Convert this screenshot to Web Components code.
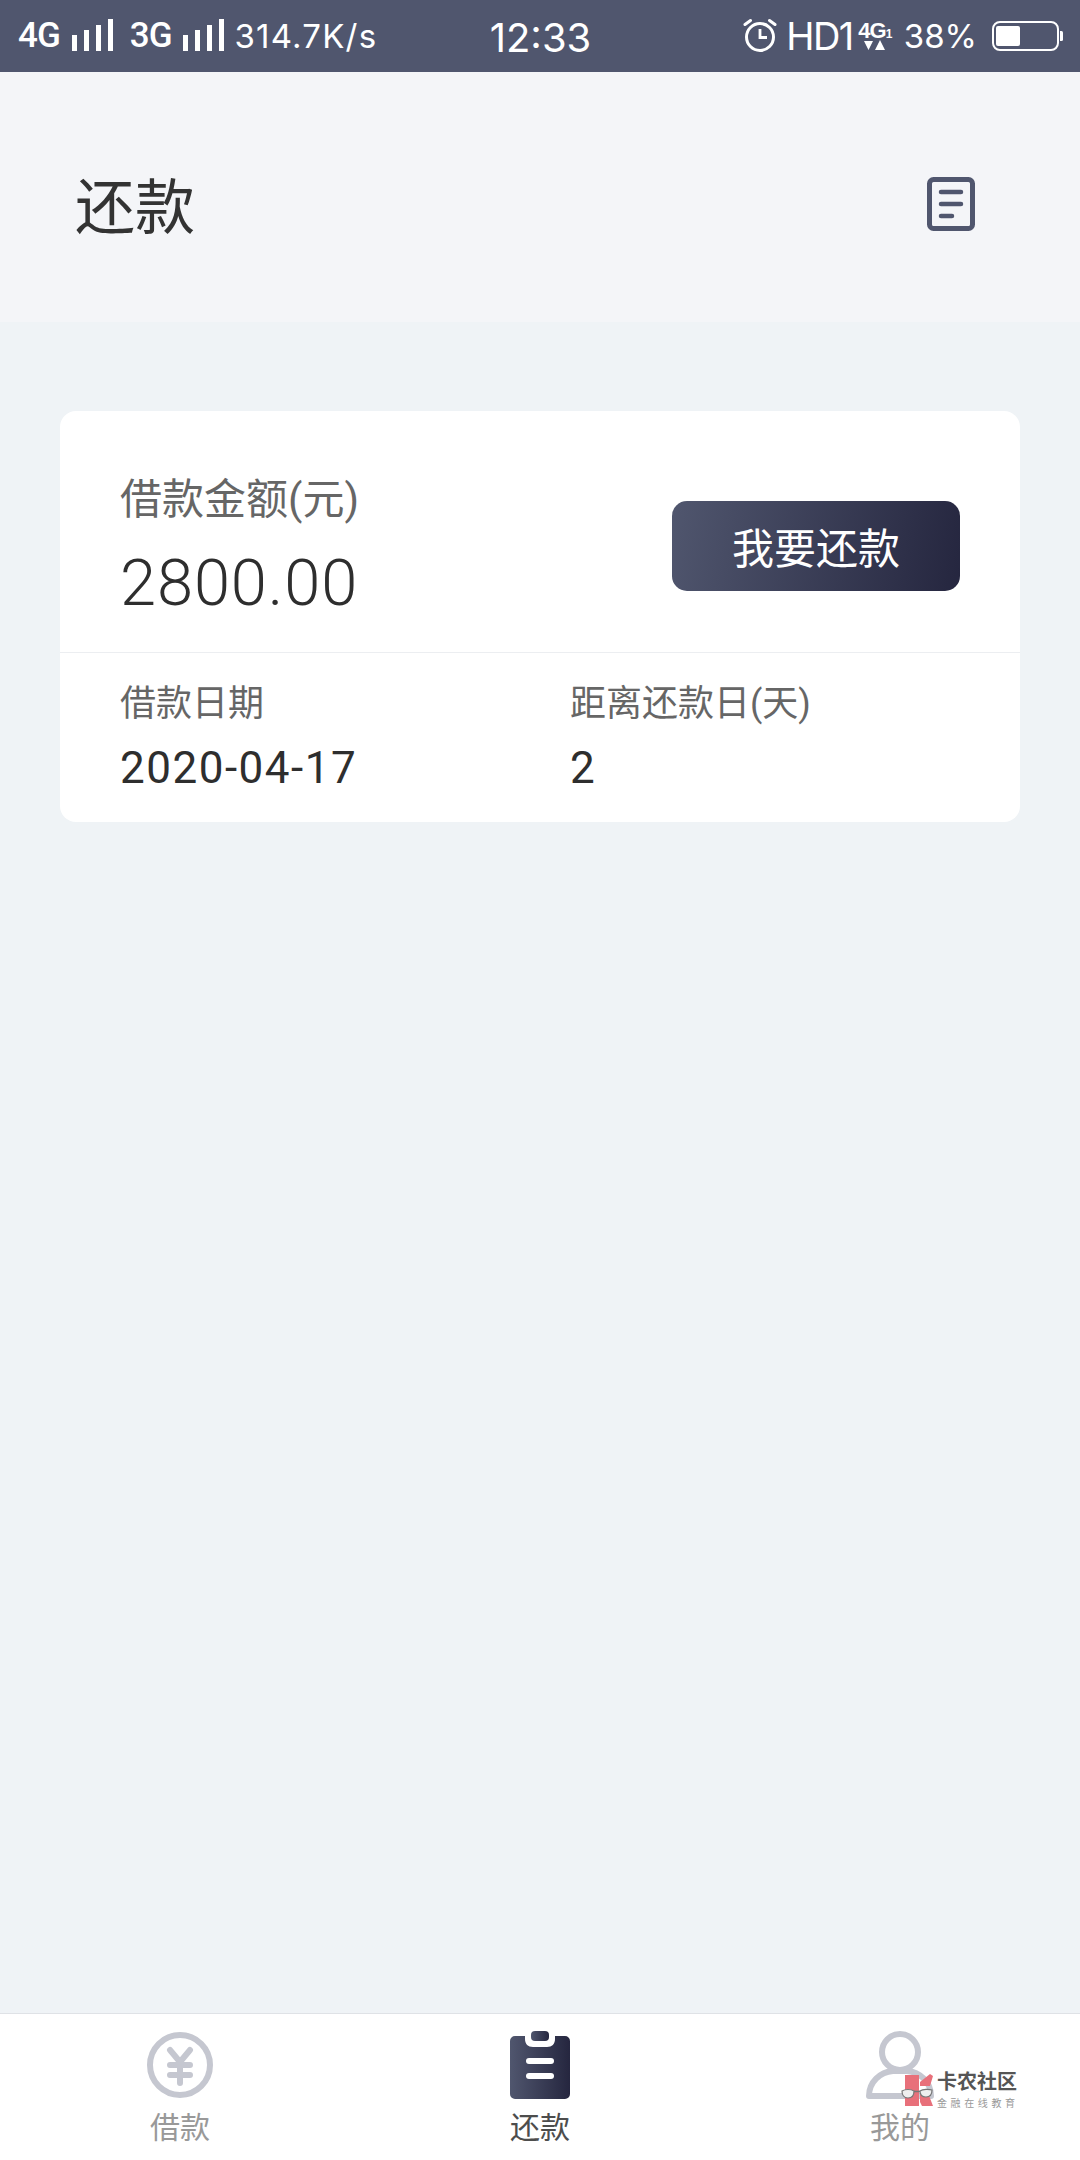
<!DOCTYPE html>
<html lang="zh">
<head>
<meta charset="utf-8">
<title>还款</title>
<style>
  html, body { margin: 0; padding: 0; height: 100%; }
  body { background: #eff3f6; font-family: Roboto, "Noto Sans CJK SC", sans-serif; }
  repay-page { height: 2160px; }
</style>
</head>
<body>
<repay-page>
  <status-bar slot="status"></status-bar>
  <page-header slot="header" title="还款"></page-header>
  <loan-card>
    <info-block slot="amount" label="借款金额(元)" value="2800.00" size="large"></info-block>
    <repay-button slot="action">我要还款</repay-button>
    <info-block slot="date" label="借款日期" value="2020-04-17"></info-block>
    <info-block slot="days" label="距离还款日(天)" value="2"></info-block>
  </loan-card>
  <tab-bar slot="tabs">
    <tab-item label="借款" icon="loan"></tab-item>
    <tab-item label="还款" icon="repay" active></tab-item>
    <tab-item label="我的" icon="me"></tab-item>
    <site-mark></site-mark>
  </tab-bar>
</repay-page>

<script>
class RepayPage extends HTMLElement {
  constructor() {
    super();
    this.attachShadow({ mode: 'open' });
    this.shadowRoot.innerHTML = `
      <style>
        :host { display: flex; flex-direction: column; background: #eff3f6; }
        main { flex: 1; padding: 89px 60px 0; }
      </style>
      <slot name="status"></slot>
      <slot name="header"></slot>
      <main><slot></slot></main>
      <slot name="tabs"></slot>
    `;
  }
}

class StatusBar extends HTMLElement {
  constructor() {
    super();
    this.attachShadow({ mode: 'open' });
    const bars = `<svg class="bars" width="42" height="32" viewBox="0 0 42 32" fill="#fff">
        <rect x="0" y="16" width="5" height="16"/><rect x="12" y="11" width="5" height="21"/>
        <rect x="24" y="6" width="5" height="26"/><rect x="36" y="0" width="5" height="32"/></svg>`;
    this.shadowRoot.innerHTML = `
      <style>
        :host {
          display: grid; grid-template-columns: 1fr auto 1fr; align-items: center;
          height: 72px; padding: 0 17px 0 18px; box-sizing: border-box;
          background: #50566e; color: #fff; font-family: Inter, Roboto, sans-serif;
        }
        .side { display: flex; align-items: center; height: 72px; }
        .right { justify-content: flex-end; }
        .net { font: 500 35px/72px Roboto, sans-serif; letter-spacing: -1px; }
        .bars { margin: -3px 0 0 12px; }
        .speed { font-size: 33px; margin-left: 9px; font-weight: 400; letter-spacing: 1.2px; }
        .clock { font-size: 40px; font-weight: 400; padding: 2px 0 0 0; }
        .hd { font-size: 38px; font-weight: 400; margin-left: 9px; letter-spacing: -1.5px; }
        .lte { margin-left: 6px; margin-right: 13px; display: flex; flex-direction: column; align-items: center; width: 32px; }
        .lte b { font: 700 22px/18px "Liberation Sans", sans-serif; letter-spacing: -1px; white-space: nowrap; }
        .lte b i { font: 700 12px/11px "Liberation Sans", sans-serif; }
        .pct { font-size: 33px; margin-right: 15px; }
        .alarm { margin-top: -2px; }
      </style>
      <div class="side">
        <span class="net">4G</span>${bars}
        <span class="net" style="margin-left:16px">3G</span>${bars}
        <span class="speed">314.7K/s</span>
      </div>
      <div class="clock">12:33</div>
      <div class="side right">
        <svg class="alarm" width="34" height="34" viewBox="0 0 34 34" fill="none" stroke="#fff" stroke-width="3">
          <circle cx="17" cy="19" r="13.5"/>
          <path d="M17 11v8.500h7" stroke-width="2.800"/>
          <path d="M2 6.500 7.500 2.500M32 6.500 26.500 2.500" stroke-linecap="round"/>
        </svg>
        <span class="hd">HD1</span>
        <span class="lte">
          <b>4G<i>1</i></b>
          <svg width="22" height="11" viewBox="0 0 22 11" fill="#fff"><path d="M0 1h9L4.500 10zM11 10h10L16 0z"/></svg>
        </span>
        <span class="pct">38%</span>
        <svg width="71" height="30" viewBox="0 0 71 30" fill="none">
          <rect x="1" y="1" width="65" height="28" rx="7" stroke="#fff" stroke-width="2"/>
          <rect x="4" y="5" width="24" height="20" rx="2" fill="#fff"/>
          <path d="M68 10h1.500a1.500 1.500 0 0 1 1.500 1.500v7a1.500 1.500 0 0 1-1.500 1.500H68z" fill="#fff"/>
        </svg>
      </div>
    `;
  }
}

class PageHeader extends HTMLElement {
  constructor() {
    super();
    this.attachShadow({ mode: 'open' });
    this.shadowRoot.innerHTML = `
      <style>
        :host {
          display: flex; align-items: center; justify-content: space-between;
          height: 250px; padding: 12px 105px 0 75px; box-sizing: border-box;
          background: #f4f5f8;
        }
        h1 { margin: 0; font: 400 60px/70px "Noto Sans CJK SC", sans-serif; color: #333; }
      </style>
      <h1>${this.getAttribute('title')}</h1>
      <svg width="48" height="54" viewBox="0 0 48 54" fill="none" stroke="#50566e" style="margin-top:2px">
        <rect x="2.500" y="2.500" width="43" height="49" rx="4" stroke-width="5"/>
        <path d="M14 15h20M14 27h20M14 39h11" stroke-width="4.500" stroke-linecap="round"/>
      </svg>
    `;
  }
}

class LoanCard extends HTMLElement {
  constructor() {
    super();
    this.attachShadow({ mode: 'open' });
    this.shadowRoot.innerHTML = `
      <style>
        :host { display: block; background: #fff; border-radius: 16px; }
        .top {
          display: flex; align-items: center; justify-content: space-between;
          height: 242px; padding: 29px 60px 0; box-sizing: border-box;
          border-bottom: 1px solid #eceef1;
        }
        .bottom {
          display: grid; grid-template-columns: 450px 1fr;
          height: 169px; padding: 28px 60px 0; box-sizing: border-box;
        }
      </style>
      <div class="top"><slot name="amount"></slot><slot name="action"></slot></div>
      <div class="bottom"><slot name="date"></slot><slot name="days"></slot></div>
    `;
  }
}

class InfoBlock extends HTMLElement {
  constructor() {
    super();
    this.attachShadow({ mode: 'open' });
    const large = this.getAttribute('size') === 'large';
    this.shadowRoot.innerHTML = `
      <style>
        :host { display: block; }
        .label {
          color: #666; font-family: Roboto, "Noto Sans CJK SC", sans-serif;
          font-size: ${large ? 42 : 36}px; line-height: ${large ? 56 : 46}px;
        }
        .value {
          color: #2e2e2e; font-family: Roboto, sans-serif; font-weight: ${large ? 300 : 400};
          font-size: ${large ? 65 : 44}px; line-height: ${large ? 76 : 52}px;
          letter-spacing: ${large ? 0.9 : 1.5}px;
          margin-top: ${large ? 17 : 15}px;
        }
      </style>
      <div class="label">${this.getAttribute('label')}</div>
      <div class="value">${this.getAttribute('value')}</div>
    `;
  }
}

class RepayButton extends HTMLElement {
  constructor() {
    super();
    this.attachShadow({ mode: 'open' });
    this.shadowRoot.innerHTML = `
      <style>
        :host {
          display: flex; align-items: center; justify-content: center;
          width: 288px; height: 90px; border-radius: 15px;
          background: linear-gradient(100deg, #50566e 0%, #25263f 100%);
          color: #fff; font: 400 42px/1 "Noto Sans CJK SC", sans-serif;
        }
      </style>
      <slot></slot>
    `;
  }
}

const TAB_ICONS = {
  loan: `<svg width="66" height="66" viewBox="0 0 66 66" fill="none" stroke="#c5c7d0">
      <circle cx="33" cy="33" r="30" stroke-width="6"/>
      <path d="M23 18 33 30 43 18M23 33h20M23 43h20M33 30v21" stroke-width="6" stroke-linecap="round" stroke-linejoin="round"/>
    </svg>`,
  repay: `<svg width="60" height="68" viewBox="0 0 60 68">
      <defs><linearGradient id="g" x1="0" x2="1" y1="0" y2="0"><stop offset="0" stop-color="#50566e"/><stop offset="1" stop-color="#25263f"/></linearGradient></defs>
      <rect x="21" y="0" width="18" height="10" rx="4" fill="url(#g)"/>
      <path d="M5 5h10v3c0 5 3 8 8 8h14c5 0 8-3 8-8V5h10a5 5 0 0 1 5 5v53a5 5 0 0 1-5 5H5a5 5 0 0 1-5-5V10a5 5 0 0 1 5-5z" fill="url(#g)"/>
      <rect x="16" y="27" width="28" height="6" rx="3" fill="#fff"/>
      <rect x="16" y="42" width="28" height="6" rx="3" fill="#fff"/>
    </svg>`,
  me: `<svg width="68" height="68" viewBox="0 0 68 68" fill="none" stroke="#c5c7d0" stroke-width="6">
      <circle cx="34" cy="21" r="18"/>
      <path d="M3 65c0-14 11-24 24-25h14c13 1 24 11 24 25z" stroke-linejoin="round"/>
    </svg>`
};

class TabItem extends HTMLElement {
  constructor() {
    super();
    this.attachShadow({ mode: 'open' });
    const active = this.hasAttribute('active');
    this.shadowRoot.innerHTML = `
      <style>
        :host { display: flex; flex-direction: column; align-items: center; flex: 1; }
        .icon { height: 68px; display: flex; align-items: center; }
        .label {
          margin-top: 6px; font: 400 30px/40px "Noto Sans CJK SC", sans-serif;
          color: ${active ? '#4d4d4d' : '#999'};
        }
      </style>
      <div class="icon">${TAB_ICONS[this.getAttribute('icon')]}</div>
      <div class="label">${this.getAttribute('label')}</div>
    `;
  }
}

class TabBar extends HTMLElement {
  constructor() {
    super();
    this.attachShadow({ mode: 'open' });
    this.shadowRoot.innerHTML = `
      <style>
        :host {
          display: flex; position: relative; height: 147px; padding-top: 17px; box-sizing: border-box;
          background: #fff; border-top: 1px solid #dfe2e6;
        }
      </style>
      <slot></slot>
    `;
  }
}

// forum watermark, sits over the third tab
class SiteMark extends HTMLElement {
  constructor() {
    super();
    this.attachShadow({ mode: 'open' });
    this.shadowRoot.innerHTML = `
      <style>
        :host {
          position: absolute; left: 900px; top: 59px; width: 120px; height: 36px;
          display: flex; gap: 3px; font-family: "Noto Sans CJK SC", sans-serif;
        }
        .name { font-size: 20px; line-height: 20px; font-weight: 700; color: #555; white-space: nowrap; margin-top: -2px; }
        .sub { font-size: 10px; line-height: 12px; color: #999; letter-spacing: 3.6px; white-space: nowrap; margin-top: 6px; }
      </style>
      <svg width="34" height="36" viewBox="0 0 34 36">
        <path d="M5 2h14v31H5zM20 9 30 1l3 2-3 10H20zM20 20h8l5 13H22l-2-4z" fill="#e8707a"/>
        <path d="M2 18c3-2 9-2 12 0 0 4-2 7-6 7s-6-3-6-7zM20 18c3-2 9-2 12-1 0 4-2 7-6 7s-6-2-6-6z" fill="#eee" stroke="#777" stroke-width="1.200"/>
        <path d="M14 18.500h6" stroke="#777" stroke-width="1.500"/>
      </svg>
      <div>
        <div class="name">卡农社区</div>
        <div class="sub">金融在线教育</div>
      </div>
    `;
  }
}

customElements.define('repay-page', RepayPage);
customElements.define('status-bar', StatusBar);
customElements.define('page-header', PageHeader);
customElements.define('loan-card', LoanCard);
customElements.define('info-block', InfoBlock);
customElements.define('repay-button', RepayButton);
customElements.define('tab-item', TabItem);
customElements.define('tab-bar', TabBar);
customElements.define('site-mark', SiteMark);
</script>
</body>
</html>
